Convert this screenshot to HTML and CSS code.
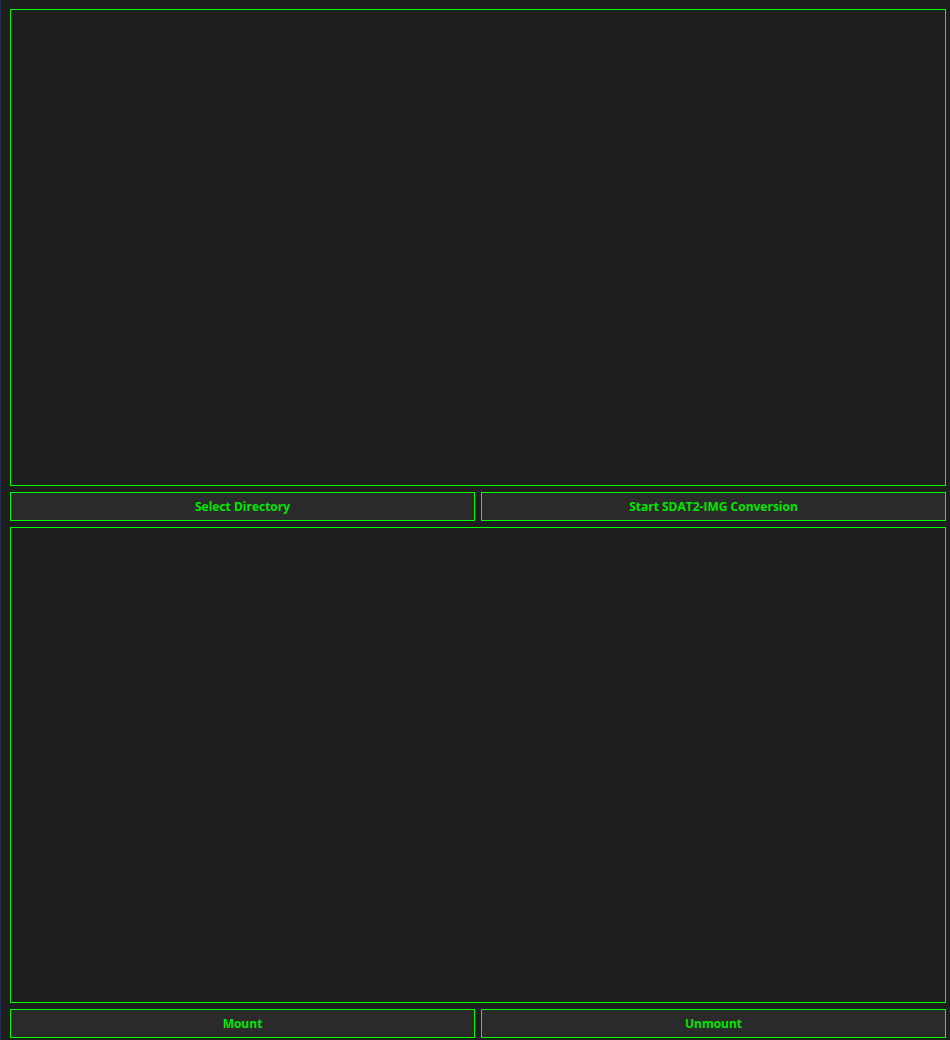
FILE: index.html
```html
<!DOCTYPE html>
<html>
<head>
<meta charset="utf-8">
<link rel="stylesheet" href="styles.css">
</head>
<body>
<div class="app">
  <div class="panel"></div>
  <div class="row">
    <button class="btn">Select Directory</button>
    <button class="btn">Start SDAT2-IMG Conversion</button>
  </div>
  <div class="panel"></div>
  <div class="row">
    <button class="btn">Mount</button>
    <button class="btn">Unmount</button>
  </div>
</div>
</body>
</html>
```
FILE: styles.css
```css
* { box-sizing: border-box; }
html, body { margin: 0; height: 100%; }
body {
  background: #1e1e1e;
  border-left: 1px solid #1f2a55;
  overflow: hidden;
}
.app {
  height: 1040px;
  padding: 9px 4px 2px 9px;
  display: grid;
  grid-template-rows: 477px 29px 476px 29px;
  gap: 6px;
}
.panel {
  border: 1px solid #00ff00;
  background: #1f1f1f;
}
.row {
  display: grid;
  grid-template-columns: 1fr 1fr;
  gap: 6px;
}
.btn {
  background: #2a2a2a;
  border: 1px solid #00ff00;
  color: #00e600;
  font-family: "Open Sans", "Noto Sans", sans-serif;
  font-weight: 700;
  font-size: 12px;
  padding: 0;
  margin: 0;
}
```
